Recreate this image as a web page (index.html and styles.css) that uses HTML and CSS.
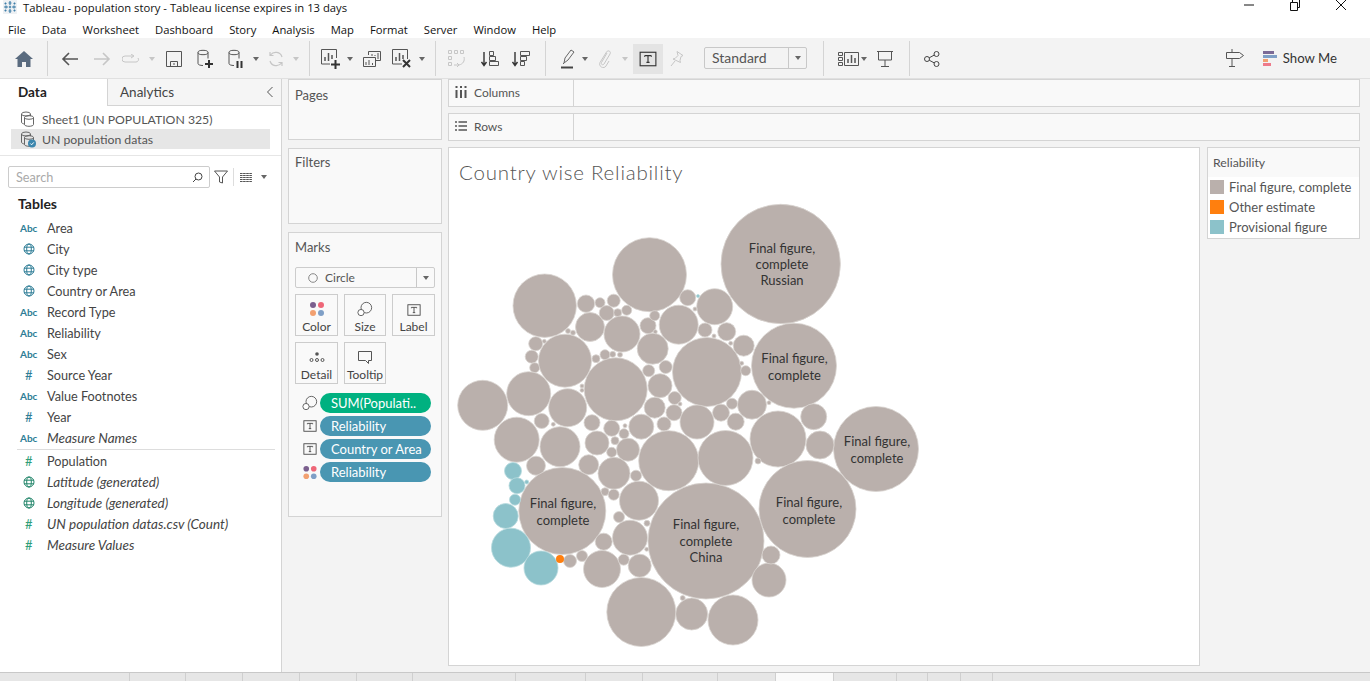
FILE: index.html
```html
<!DOCTYPE html>
<html lang="en">
<head>
    <meta charset="UTF-8">
    <title>Tableau - population story</title>
    <link rel="stylesheet" href="styles.css">
</head>
<body>
    <svg class="defs" width="0" height="0">
        <symbol id="i-text" viewBox="0 0 16 16"><rect x="1" y="2" width="14" height="12" fill="none" stroke="currentColor"/><path d="M5 5h6M8 5v6M6.6 11h2.8M5 5v1M11 5v1" fill="none" stroke="currentColor"/></symbol>
        <symbol id="i-size" viewBox="0 0 18 18"><circle cx="10.5" cy="7.5" r="6" fill="none" stroke="currentColor"/><circle cx="4.5" cy="13" r="3.5" fill="#fff" stroke="currentColor"/></symbol>
        <symbol id="i-color" viewBox="0 0 16 16"><circle cx="4" cy="4" r="3" fill="#7b5f8e"/><circle cx="12" cy="4" r="3" fill="#ee6677"/><circle cx="4" cy="12" r="3" fill="#f2a070"/><circle cx="12" cy="12" r="3" fill="#7f9fc6"/></symbol>
        <symbol id="i-globe" viewBox="0 0 12 12"><g fill="none" stroke="#2e7d96"><circle cx="6" cy="6" r="5"/><ellipse cx="6" cy="6" rx="2.3" ry="5"/><path d="M1 4.2h10M1 7.8h10"/></g></symbol>
        <symbol id="i-ds" viewBox="0 0 18 20"><g fill="none" stroke="currentColor"><ellipse cx="7" cy="3.5" rx="5" ry="2.2"/><path d="M2 3.5v11c0 1.2 2 2 5 2M12 3.5v6"/></g></symbol>
        <symbol id="i-stack" viewBox="0 0 16 16"><g fill="none" stroke="#666"><ellipse cx="6" cy="3" rx="4.500" ry="2"/><path d="M1.500 3v8c0 1.200 1.500 2 3.500 2M10.500 3v2"/><ellipse cx="9" cy="6.500" rx="4.500" ry="1.800"/><path d="M4.500 6.500v7c0 1 2 1.800 4.500 1.800s4.500-.8 4.500-1.800v-7"/></g></symbol>
    </svg>

    <div class="titlebar">
        <svg class="app-logo" width="14" height="14" viewBox="0 0 14 14"><rect width="14" height="14" fill="#eef1f4"/><g stroke="#3f7fa8" stroke-width="1.2"><path d="M7 1v4M5.5 3h3M7 9v4M5.5 11h3M1 7h4M3 5.5v3M9 7h4M11 5.5v3M2.5 2.5v2M1.5 3.5h2M11.5 2.5v2M10.5 3.5h2M2.5 9.5v2M1.5 10.5h2M11.5 9.5v2M10.5 10.5h2M5.8 7h2.4M7 5.8v2.4"/></g></svg>
        <span class="app-title">Tableau - population story - Tableau license expires in 13 days</span>
        <div class="win-btns">
            <svg width="12" height="12" viewBox="0 0 12 12"><path d="M1 6h10" stroke="#111"/></svg>
            <svg width="12" height="12" viewBox="0 0 12 12"><path d="M1.500 3.500h7v8h-7zM3.500 3.500v-3h7v8h-2" fill="none" stroke="#111"/></svg>
            <svg width="12" height="12" viewBox="0 0 12 12"><path d="M1 1l10 10M11 1L1 11" stroke="#111"/></svg>
        </div>
    </div>

    <nav class="menubar">
        <span>File</span><span>Data</span><span>Worksheet</span><span>Dashboard</span><span>Story</span><span>Analysis</span><span>Map</span><span>Format</span><span>Server</span><span>Window</span><span>Help</span>
    </nav>

    <div class="toolbar">
        <div class="tool w32"><svg width="18" height="16" viewBox="0 0 18 16"><path d="M9 0L0 8h2.500v8h4.500v-5h4v5h4.500V8H18z" fill="#5a6b7f"/></svg></div>
        <i class="sep sep-a"></i>
        <div class="tool w32"><svg width="18" height="14" viewBox="0 0 18 14"><path d="M17 7H2M8 1L2 7l6 6" fill="none" stroke="#555" stroke-width="1.600"/></svg></div>
        <div class="tool w32 off"><svg width="18" height="14" viewBox="0 0 18 14"><path d="M1 7h15M10 1l6 6-6 6" fill="none" stroke="currentColor" stroke-width="1.600"/></svg></div>
        <div class="tool w26 off"><svg width="18" height="10" viewBox="0 0 18 10"><path d="M11 2H3a2.500 2.500 0 0 0 0 6h11a2.500 2.500 0 0 0 2-4M9 0l3 2-3 2" fill="none" stroke="currentColor"/></svg></div>
        <div class="tool w16 off"><b class="caret"></b></div>
        <div class="tool w28"><svg width="16" height="16" viewBox="0 0 16 16"><path d="M.5.500h15v15H.5zM4.500 15.500v-5h7v5M7 13h2" fill="none" stroke="#555"/></svg></div>
        <div class="tool w34"><svg width="18" height="20" viewBox="0 0 18 20" color="#555"><use href="#i-ds"/><path d="M9 15h8M13 11v8" stroke="#333" stroke-width="2"/></svg></div>
        <div class="tool w28"><svg width="18" height="20" viewBox="0 0 18 20" color="#555"><use href="#i-ds"/><path d="M10.500 12v7M14.500 12v7" stroke="#333" stroke-width="2"/></svg></div>
        <div class="tool w12"><b class="caret"></b></div>
        <div class="tool w28 off"><svg width="16" height="16" viewBox="0 0 16 16"><path d="M14 6a6.500 6.500 0 0 0-11.500-2M2 10a6.500 6.500 0 0 0 11.500 2M2 1v3.500h3.500M14 15v-3.500h-3.500" fill="none" stroke="currentColor" stroke-width="1.200"/></svg></div>
        <div class="tool w12 off"><b class="caret"></b></div>
        <i class="sep sep-a"></i>
        <div class="tool w30"><svg width="20" height="20" viewBox="0 0 20 20"><path d="M9 15H.5V.5h15V9" fill="none" stroke="#555"/><path d="M4 12V8M7.500 12V4M11 10V6" stroke="#555" stroke-width="1.500"/><path d="M10 15.500h9M14.500 11v9" stroke="#333" stroke-width="2"/></svg></div>
        <div class="tool w8"><b class="caret"></b></div>
        <div class="tool w36"><svg width="18" height="16" viewBox="0 0 18 16"><path d="M5.500 4V.5h12v9H13M.5 6.500h12v9H.5z" fill="#f3f3f3" stroke="#555"/><path d="M3 14v-3M6 14v-5M9.500 14v-2M9 5V3M12 5V4M15 8V2" stroke="#555"/></svg></div>
        <div class="tool w24"><svg width="20" height="20" viewBox="0 0 20 20"><path d="M10 15H.5V.5h15V10" fill="none" stroke="#555"/><path d="M4 12V8M7.500 12V4M11 10V6" stroke="#555" stroke-width="1.500"/><path d="M11 11l7 7M18 11l-7 7" stroke="#333" stroke-width="2"/></svg></div>
        <div class="tool w16"><b class="caret"></b></div>
        <i class="sep sep-b"></i>
        <div class="tool w30 off"><svg width="18" height="18" viewBox="0 0 18 18"><path d="M.5.500h3v3h-3zM6.500.5h3v3h-3zM12.500.5h3v3h-3zM.5 6.500h3v3h-3zM.5 12.500h3v3h-3zM16 7c1 4-1 7-5 8M6 15l5 0M9 13l2 2-2 2" fill="none" stroke="currentColor"/></svg></div>
        <div class="tool w36"><svg width="18" height="16" viewBox="0 0 18 16"><path d="M3 1v13M.5 11L3 14.500 5.500 11" fill="none" stroke="#333" stroke-width="1.400"/><path d="M8.500.5h4v4h-4zM8.500 5.500h6v4h-6zM8.500 10.500h9v4h-9z" fill="none" stroke="#555"/></svg></div>
        <div class="tool w26"><svg width="18" height="16" viewBox="0 0 18 16"><path d="M3 1v13M.5 11L3 14.500 5.500 11" fill="none" stroke="#333" stroke-width="1.400"/><path d="M8.500.5h9v4h-9zM8.500 5.500h6v4h-6zM8.500 10.500h4v4h-4z" fill="none" stroke="#555"/></svg></div>
        <i class="sep sep-c"></i>
        <div class="tool w28"><svg width="14" height="20" viewBox="0 0 14 20"><path d="M3 14l1-5L10 1l3 2-6 8zM2 15l1-1" fill="none" stroke="#666"/><path d="M0 18.500h12" stroke="#444" stroke-width="2"/></svg></div>
        <div class="tool w6"><b class="caret"></b></div>
        <div class="tool w34 off"><svg width="14" height="18" viewBox="0 0 14 18"><path d="M9 3L3.500 12.500c-1 2 1.500 3 2.500 1.500L12 4c1.500-2.500-2-4.500-3.500-2L2 12.500c-2 4 4 7 6 3.500l3-5" fill="none" stroke="currentColor"/></svg></div>
        <div class="tool w6 off"><b class="caret"></b></div>
        <div class="tool w30 tool-on"><svg width="18" height="18" color="#333"><use href="#i-text"/></svg></div>
        <div class="tool w28 off"><svg width="14" height="16" viewBox="0 0 14 16"><path d="M7 .5l6 4-2 1-1 4 .5 2L3 8l2-.5 3-3zM5 10l-4 5" fill="none" stroke="currentColor"/></svg></div>
        <div class="fit-select"><span>Standard</span><b class="caret-box"><b class="caret"></b></b></div>
        <i class="sep sep-d"></i>
        <div class="tool w26"><svg width="21" height="14" viewBox="0 0 21 14"><path d="M.5.500h4v3h-4zM.5 5.500h4v3h-4zM.5 10.500h4v3h-4zM6.500.5h14v13h-14z" fill="none" stroke="#555"/><path d="M10 11V7M13.500 11V3M17 11V6" stroke="#555" stroke-width="1.500"/></svg></div>
        <div class="tool w6"><b class="caret"></b></div>
        <div class="tool w36"><svg width="16" height="16" viewBox="0 0 16 16"><path d="M0 .5h16M1.500 1v8h13V1M8 9v6M4 15.500h8" fill="none" stroke="#555"/></svg></div>
        <i class="sep sep-e"></i>
        <div class="tool w32"><svg width="16" height="16" viewBox="0 0 16 16"><g fill="none" stroke="#444"><circle cx="3" cy="8" r="2.500"/><circle cx="12.500" cy="3" r="2.500"/><circle cx="12.500" cy="13" r="2.500"/><path d="M5.200 6.800l5-2.700M5.200 9.200l5 2.700"/></g></svg></div>
        <div class="tool-right">
            <svg width="18" height="18" viewBox="0 0 18 18"><path d="M.5 3.500h13l4 3-4 3H.5zM6 0v3M6 10v7M3 17.500h6" fill="none" stroke="#555"/></svg>
            <div class="show-me">
                <svg width="14" height="15" viewBox="0 0 14 15"><rect width="11" height="3" fill="#7b6a96"/><rect y="4" width="14" height="3" fill="#7f9fc6"/><rect y="8" width="5" height="3" fill="#f2a070"/><rect y="12" width="8" height="3" fill="#ee7a8a"/></svg>
                <span>Show Me</span>
            </div>
        </div>
    </div>

    <main class="main">
        <aside class="sidebar">
            <div class="side-tabs">
                <div class="side-tab active">Data</div>
                <div class="side-tab other">Analytics<svg width="8" height="12" viewBox="0 0 8 12"><path d="M6.500 1L1.500 6l5 5" fill="none" stroke="#555"/></svg></div>
            </div>
            <div class="sources">
                <div class="source"><svg width="16" height="16"><use href="#i-stack"/></svg>Sheet1 (UN POPULATION 325)</div>
                <div class="source selected"><svg width="16" height="17" viewBox="0 0 16 17"><use href="#i-stack" width="16" height="16"/><circle cx="12" cy="12.500" r="4" fill="#3b86ad"/><path d="M10.300 12.500l1.300 1.300 2.200-2.400" fill="none" stroke="#fff"/></svg>UN population datas</div>
            </div>
            <div class="search-row">
                <div class="search"><span>Search</span><svg width="11" height="11" viewBox="0 0 11 11"><circle cx="6.500" cy="4.500" r="3.500" fill="none" stroke="#444"/><path d="M4 7L1 10" stroke="#444"/></svg></div>
                <svg class="search-filter" width="14" height="14" viewBox="0 0 14 14"><path d="M.5 1h13L8.500 7v6l-3-1V7z" fill="none" stroke="#555"/></svg>
                <i class="search-sep"></i>
                <svg class="search-list" width="12" height="9" viewBox="0 0 12 9"><path d="M0 .5h12M0 2.500h12M0 4.500h12M0 6.500h12M0 8.500h12" stroke="#555" stroke-dasharray="2.600 .5"/></svg>
                <b class="caret"></b>
            </div>
            <h2 class="tables">Tables</h2>
            <ul class="fields">
                <li><span class="abc">Abc</span>Area</li>
                <li><span class="ficon"><svg width="12" height="12"><use href="#i-globe"/></svg></span>City</li>
                <li><span class="ficon"><svg width="12" height="12"><use href="#i-globe"/></svg></span>City type</li>
                <li><span class="ficon"><svg width="12" height="12"><use href="#i-globe"/></svg></span>Country or Area</li>
                <li><span class="abc">Abc</span>Record Type</li>
                <li><span class="abc">Abc</span>Reliability</li>
                <li><span class="abc">Abc</span>Sex</li>
                <li><span class="hash">#</span>Source Year</li>
                <li><span class="abc">Abc</span>Value Footnotes</li>
                <li><span class="hash">#</span>Year</li>
                <li class="gen"><span class="abc">Abc</span>Measure Names</li>
            </ul>
            <ul class="fields measures">
                <li><span class="hash green">#</span>Population</li>
                <li class="gen"><span class="ficon"><svg width="12" height="12" class="to-green"><use href="#i-globe"/></svg></span>Latitude (generated)</li>
                <li class="gen"><span class="ficon"><svg width="12" height="12" class="to-green"><use href="#i-globe"/></svg></span>Longitude (generated)</li>
                <li class="gen"><span class="hash green">#</span>UN population datas.csv (Count)</li>
                <li class="gen"><span class="hash green">#</span>Measure Values</li>
            </ul>
        </aside>

        <div class="cards">
            <section class="card pages"><h3>Pages</h3></section>
            <section class="card filters"><h3>Filters</h3></section>
            <section class="card marks">
                <h3>Marks</h3>
                <div class="mark-type"><svg width="10" height="10" viewBox="0 0 10 10"><circle cx="5" cy="5" r="4.300" fill="none" stroke="#888"/></svg><span>Circle</span><b class="caret-box"><b class="caret"></b></b></div>
                <div class="mark-grid">
                    <div class="mark-btn"><svg width="16" height="16"><use href="#i-color"/></svg>Color</div>
                    <div class="mark-btn"><svg width="16" height="16" color="#555"><use href="#i-size"/></svg>Size</div>
                    <div class="mark-btn"><svg width="14" height="14" color="#444"><use href="#i-text"/></svg>Label</div>
                    <div class="mark-btn"><svg width="16" height="16" viewBox="0 0 16 16"><circle cx="8" cy="5" r="1.800" fill="#555"/><g fill="none" stroke="#555"><circle cx="2.500" cy="11" r="1.500"/><circle cx="8" cy="11" r="1.500"/><circle cx="13.500" cy="11" r="1.500"/></g></svg>Detail</div>
                    <div class="mark-btn"><svg width="16" height="16" viewBox="0 0 16 16"><path d="M1.500 2.500h13v9h-3v3l-3-3h-7z" fill="none" stroke="#555"/></svg>Tooltip</div>
                </div>
                <div class="pill-row"><svg width="16" height="16" color="#555"><use href="#i-size"/></svg><span class="pill measure">SUM(Populati..</span></div>
                <div class="pill-row"><svg width="14" height="14" color="#444"><use href="#i-text"/></svg><span class="pill">Reliability</span></div>
                <div class="pill-row"><svg width="14" height="14" color="#444"><use href="#i-text"/></svg><span class="pill">Country or Area</span></div>
                <div class="pill-row"><svg width="15" height="15"><use href="#i-color"/></svg><span class="pill">Reliability</span></div>
            </section>
        </div>

        <div class="work">
            <div class="shelf">
                <div class="shelf-label"><svg width="12" height="12" viewBox="0 0 12 12"><path d="M1.500 0v2M6 0v2M10.500 0v2M1.500 4v8M6 4v8M10.500 4v8" stroke="#555" stroke-width="2"/></svg>Columns</div>
            </div>
            <div class="shelf">
                <div class="shelf-label"><svg width="12" height="12" viewBox="0 0 12 12"><path d="M0 2h2M3.500 2H12M0 6h2M3.500 6H12M0 10h2M3.500 10H12" stroke="#555" stroke-width="1.500"/></svg>Rows</div>
            </div>
            <div class="view-row">
                <div class="canvas">
                    <div class="viz-title">Country wise Reliability</div>
                    <svg class="viz" width="750" height="477" viewBox="449 188 750 477">
                        <g class="final">
                            <circle cx="649.500" cy="274.700" r="37"/><circle cx="544.700" cy="305.700" r="31.700"/><circle cx="586" cy="303.700" r="8.700"/><circle cx="600" cy="302.700" r="5"/>
                            <circle cx="613.700" cy="300.700" r="6.500"/><circle cx="606.700" cy="313" r="7.500"/><circle cx="617.700" cy="312.700" r="4"/><circle cx="626.700" cy="310.300" r="5"/>
                            <circle cx="590" cy="327" r="14.500"/><circle cx="622" cy="334" r="18"/><circle cx="648" cy="325.700" r="8"/><circle cx="654.700" cy="315.700" r="5"/>
                            <circle cx="652.700" cy="348.700" r="15.500"/><circle cx="678.700" cy="324.700" r="19.500"/><circle cx="687.700" cy="297.700" r="8"/><circle cx="535.700" cy="343.700" r="7"/>
                            <circle cx="531.700" cy="356.700" r="6.500"/><circle cx="534.700" cy="367.700" r="5"/><circle cx="565" cy="360.700" r="26.500"/><circle cx="596" cy="358.700" r="4"/>
                            <circle cx="605" cy="354.700" r="5"/><circle cx="612.700" cy="354.300" r="3"/><circle cx="620" cy="354.700" r="2.500"/><circle cx="615.700" cy="389.300" r="31.500"/>
                            <circle cx="648.700" cy="370.700" r="6"/><circle cx="665.700" cy="367" r="6.500"/><circle cx="660" cy="385.700" r="12"/><circle cx="674.700" cy="398" r="6.500"/>
                            <circle cx="654.700" cy="407.700" r="10.500"/><circle cx="674" cy="412.700" r="8"/><circle cx="707" cy="372" r="34.500"/><circle cx="528.700" cy="393.700" r="22"/>
                            <circle cx="482.700" cy="405.300" r="25"/><circle cx="567.700" cy="407.700" r="19"/><circle cx="541.700" cy="421" r="7.500"/><circle cx="592" cy="422.700" r="8"/>
                            <circle cx="611.700" cy="428.300" r="8"/><circle cx="641.300" cy="426.700" r="12.500"/><circle cx="664" cy="424" r="7"/><circle cx="516.700" cy="439.700" r="22.500"/>
                            <circle cx="582" cy="386" r="2"/><circle cx="582" cy="390.300" r="2"/><circle cx="568" cy="331" r="2.500"/><circle cx="573" cy="332.700" r="2.500"/>
                            <circle cx="544.300" cy="341.300" r="2"/><circle cx="680" cy="404" r="2"/><circle cx="655.300" cy="331.700" r="2"/><circle cx="625" cy="425.700" r="2"/>
                            <circle cx="553.300" cy="424.300" r="2"/><circle cx="560" cy="446.700" r="20"/><circle cx="536" cy="465.700" r="9.500"/><circle cx="597" cy="443" r="12"/>
                            <circle cx="624" cy="433.700" r="5"/><circle cx="615" cy="440.700" r="4"/><circle cx="611.700" cy="452.300" r="5"/><circle cx="628" cy="449.700" r="11.500"/>
                            <circle cx="588.700" cy="464.700" r="10"/><circle cx="614" cy="473.300" r="16"/><circle cx="636" cy="475.700" r="5.500"/><circle cx="668.700" cy="460.700" r="30"/>
                            <circle cx="562.300" cy="511" r="43.500"/><circle cx="570" cy="561" r="6.500"/><circle cx="582" cy="556" r="5.500"/><circle cx="603.700" cy="541.700" r="8.500"/>
                            <circle cx="602" cy="569" r="18.500"/><circle cx="630" cy="537.700" r="17.500"/><circle cx="639" cy="500.700" r="19.500"/><circle cx="605" cy="491.700" r="4"/>
                            <circle cx="613.700" cy="494.700" r="5.500"/><circle cx="619" cy="517" r="5.500"/><circle cx="647" cy="523.300" r="3"/><circle cx="623.700" cy="559.700" r="5.500"/>
                            <circle cx="639.700" cy="565.700" r="11.500"/><circle cx="646.700" cy="549.300" r="2"/><circle cx="641.300" cy="612" r="34.500"/><circle cx="691.700" cy="614" r="16"/>
                            <circle cx="682.700" cy="598" r="2.500"/><circle cx="706" cy="541" r="58"/><circle cx="733" cy="620" r="25"/><circle cx="769" cy="580" r="17"/>
                            <circle cx="771" cy="555" r="9"/><circle cx="780.700" cy="264" r="59.700"/><circle cx="794" cy="365.700" r="42.500"/><circle cx="714.700" cy="306.700" r="18"/>
                            <circle cx="705" cy="330" r="7"/><circle cx="726.700" cy="331.700" r="9"/><circle cx="743.700" cy="345.700" r="10.500"/><circle cx="745.700" cy="370.700" r="5"/>
                            <circle cx="752" cy="404.700" r="14.500"/><circle cx="721" cy="412.700" r="8.500"/><circle cx="732" cy="403.700" r="5.500"/><circle cx="735.700" cy="421.700" r="8.500"/>
                            <circle cx="778" cy="439" r="28"/><circle cx="813.700" cy="416.700" r="13"/><circle cx="697" cy="422" r="17"/><circle cx="769" cy="402.700" r="2"/>
                            <circle cx="741.700" cy="363.300" r="2"/><circle cx="730.700" cy="343.300" r="2"/><circle cx="714" cy="336" r="2"/><circle cx="695" cy="309" r="2"/>
                            <circle cx="876" cy="449" r="42.500"/><circle cx="820" cy="445" r="14"/><circle cx="807.500" cy="509" r="48.500"/><circle cx="725.500" cy="458" r="27.500"/>
                            <circle cx="758" cy="461" r="3"/>
                        </g>
                        <g class="prov">
                            <circle cx="513" cy="471" r="8.500"/><circle cx="517" cy="485.700" r="8"/><circle cx="526.700" cy="482" r="2"/><circle cx="515" cy="499.700" r="5.500"/>
                            <circle cx="505.700" cy="516" r="12.500"/><circle cx="511" cy="547.700" r="19.500"/><circle cx="541" cy="568" r="17"/><circle cx="698" cy="296" r="1.500"/>
                        </g>
                        <circle class="other" cx="560" cy="559" r="4"/>
                        <g class="labels">
                            <text x="782" y="253">Final figure,</text><text x="782" y="269">complete</text><text x="782" y="285">Russian</text>
                            <text x="794.500" y="363">Final figure,</text><text x="794.500" y="380">complete</text>
                            <text x="877" y="446">Final figure,</text><text x="877" y="463">complete</text>
                            <text x="809" y="507">Final figure,</text><text x="809" y="524">complete</text>
                            <text x="563" y="508">Final figure,</text><text x="563" y="525">complete</text>
                            <text x="706" y="529">Final figure,</text><text x="706" y="546">complete</text><text x="706" y="562">China</text>
                        </g>
                    </svg>
                </div>
                <div class="legend">
                    <div class="legend-title">Reliability</div>
                    <div class="legend-item"><i class="swatch sw-final"></i>Final figure, complete</div>
                    <div class="legend-item"><i class="swatch sw-other"></i>Other estimate</div>
                    <div class="legend-item"><i class="swatch sw-prov"></i>Provisional figure</div>
                </div>
            </div>
        </div>
    </main>

    <div class="tabstrip">
        <i></i><i></i><i></i><i></i><i></i><i></i><i></i><i></i><i></i><i></i><i></i><i class="current"></i><i></i><i></i><i></i><i></i>
    </div>
</body>
</html>
```

FILE: styles.css
```css
* {
    box-sizing: border-box;
}

html, body {
    margin: 0;
    padding: 0;
}

body {
    width: 1370px;
    height: 681px;
    overflow: hidden;
    background-color: #fff;
    color: #333;
    font-family: 'Lato', 'Open Sans', sans-serif;
    font-size: 12.700px;
}

.defs {
    display: block;
    height: 0;
}

/* title and menu */
.titlebar {
    height: 15px;
    display: flex;
    align-items: center;
    padding-left: 3px;
    font-family: 'Open Sans', sans-serif;
    font-size: 11.250px;
    color: #111;
}

.app-logo {
    align-self: flex-start;
    margin-right: 6px;
}

.win-btns {
    align-self: flex-start;
    margin-left: auto;
    margin-top: -1px;
    padding-right: 23px;
    display: flex;
    gap: 34px;
}

.menubar {
    height: 23px;
    display: flex;
    align-items: center;
    gap: 16px;
    padding: 5px 0 0 8px;
    font-family: 'Open Sans', sans-serif;
    font-size: 11.250px;
    color: #111;
}

/* toolbar */
.toolbar {
    height: 41px;
    display: flex;
    align-items: center;
    padding-left: 8px;
    padding-right: 33px;
    background-color: #f3f3f3;
    border-bottom: 1px solid #e0e0e0;
}

.tool {
    height: 30px;
    flex: none;
    margin-top: 1px;
    display: flex;
    align-items: center;
    justify-content: center;
    color: #555;
}

.tool.off {
    color: #c6c6c6;
}

.tool-on {
    margin-left: 5px;
    background-color: #e4e4e4;
}

.w6 { width: 6px; }
.w8 { width: 8px; }
.w12 { width: 12px; }
.w16 { width: 16px; }
.w24 { width: 24px; }
.w26 { width: 26px; }
.w28 { width: 28px; }
.w30 { width: 30px; }
.w32 { width: 32px; }
.w34 { width: 34px; }
.w36 { width: 36px; }

.caret {
    display: block;
    width: 0;
    height: 0;
    border-left: 3.500px solid transparent;
    border-right: 3.500px solid transparent;
    border-top: 4px solid #666;
}

.off .caret {
    border-top-color: #c6c6c6;
}

.sep {
    flex: none;
    width: 1px;
    height: 35px;
    background-color: #d4d4d4;
}

.sep-a { margin: 1px 6px 0 7px; }
.sep-b { margin: 1px 6px 0 5px; }
.sep-c { margin: 1px 8px 0 11px; }
.sep-d { margin: 1px 11px 0 16px; }
.sep-e { margin: 1px 6px 0; }

.fit-select {
    width: 103px;
    height: 22px;
    margin-left: 13px;
    display: flex;
    align-items: center;
    justify-content: space-between;
    padding-left: 7px;
    border: 1px solid #c8c8c8;
    border-radius: 2px;
    font-size: 14px;
    color: #555;
}

.fit-select span {
    margin-top: -2px;
}

.caret-box {
    width: 18px;
    height: 100%;
    display: flex;
    align-items: center;
    justify-content: center;
    border-left: 1px solid #c8c8c8;
}

.tool-right {
    margin-left: auto;
    display: flex;
    align-items: center;
    gap: 19px;
}

.show-me {
    display: flex;
    align-items: center;
    gap: 6px;
    font-size: 13.200px;
}

/* main area */
.main {
    height: 593px;
    display: flex;
    background-color: #f3f3f3;
}

.sidebar {
    width: 282px;
    flex: none;
    background-color: #fff;
    border-right: 1px solid #d4d4d4;
}

.side-tabs {
    height: 27px;
    display: flex;
}

.side-tab {
    display: flex;
    align-items: center;
    padding-bottom: 1px;
    font-size: 13.500px;
}

.side-tab.active {
    width: 107px;
    padding-left: 18px;
    font-weight: 700;
    color: #222;
}

.side-tab.other {
    flex: 1;
    justify-content: space-between;
    padding-left: 12px;
    padding-right: 7px;
    background-color: #f5f5f5;
    border-left: 1px solid #d4d4d4;
    border-bottom: 1px solid #d4d4d4;
    color: #444;
}

.sources {
    padding: 3px 11px 6px;
    border-bottom: 1px solid #e6e6e6;
    font-size: 12.250px;
}

.source {
    height: 20px;
    display: flex;
    align-items: center;
    gap: 6px;
    padding-left: 9px;
    color: #555;
}

.source.selected {
    background-color: #e6e6e6;
}

.search-row {
    display: flex;
    align-items: center;
    padding: 10px 0 0 8px;
}

.search {
    width: 202px;
    height: 22px;
    display: flex;
    align-items: center;
    justify-content: space-between;
    padding: 0 6px 0 7px;
    background-color: #fff;
    border: 1px solid #ccc;
    border-radius: 2px;
    color: #aaa;
}

.search-filter {
    margin-left: 4px;
}

.search-sep {
    width: 1px;
    height: 18px;
    margin: 0 6px 0 5px;
    background-color: #ddd;
}

.search-list {
    margin-right: 9px;
}

.tables {
    margin: 7px 0 4px 18px;
    font-size: 14px;
    line-height: 18px;
    font-weight: 700;
    color: #222;
}

.fields {
    margin: 0;
    padding: 0;
    list-style: none;
}

.fields li {
    height: 21px;
    display: flex;
    align-items: center;
    color: #444;
}

.fields li.gen {
    font-size: 13.500px;
    font-style: italic;
}

.measures {
    margin: 1px 6px 0 17px;
    border-top: 1px solid #ddd;
}

.measures li {
    margin-left: -17px;
}

.abc, .ficon, .hash {
    width: 47px;
    flex: none;
    padding-left: 21px;
    display: flex;
    align-items: center;
    font-style: normal;
    color: #2e7d96;
}

.abc {
    font-size: 10px;
    padding-left: 20px;
    font-weight: 700;
}

.ficon {
    padding-left: 23px;
}

.hash {
    padding-left: 25px;
    font-size: 13px;
}

.hash.green {
    color: #2e9e78;
}

.to-green {
    filter: hue-rotate(-35deg);
}

/* pages, filters, marks */
.cards {
    width: 154px;
    flex: none;
    margin-left: 6px;
    display: flex;
    flex-direction: column;
    gap: 8px;
}

.card {
    background-color: #f9f9f9;
    border: 1px solid #d4d4d4;
    padding: 6px 6px 0;
}

.card h3 {
    margin: 0;
    font-size: 13px;
    line-height: 16px;
    font-weight: 400;
    color: #555;
}

.pages { height: 61px; padding-top: 7px; }
.filters { height: 76px; padding-top: 5px; }
.marks { height: 285px; }

.mark-type {
    height: 21px;
    margin-top: 12px;
    display: flex;
    align-items: center;
    padding-left: 12px;
    background-color: #f9f9f9;
    border: 1px solid #ccc;
    border-radius: 2px;
    font-size: 12px;
    color: #555;
}

.mark-type span {
    margin-left: 7px;
    flex: 1;
}

.mark-grid {
    margin-top: 6px;
    display: grid;
    grid-template-columns: 43px 42px 43px;
    grid-auto-rows: 42px;
    gap: 6px;
}

.mark-btn {
    display: flex;
    flex-direction: column;
    align-items: center;
    justify-content: flex-end;
    gap: 2px;
    padding-bottom: 1px;
    border: 1px solid #ccc;
    font-size: 12px;
    color: #444;
}

.pill-row {
    height: 20px;
    margin-top: 3px;
    display: flex;
    align-items: center;
}

.mark-grid + .pill-row {
    margin-top: 9px;
}

.pill-row svg {
    width: 16px;
    margin-left: 7px;
}

.pill {
    width: 111px;
    height: 20px;
    margin-left: 2px;
    padding-left: 11px;
    display: flex;
    align-items: center;
    border-radius: 10px;
    background-color: #4996b2;
    color: #fff;
    font-size: 13px;
    white-space: nowrap;
}

.pill.measure {
    background-color: #00b180;
}

/* shelves and view */
.work {
    width: 912px;
    flex: none;
    margin-left: 6px;
    display: flex;
    flex-direction: column;
    gap: 6px;
}

.shelf {
    height: 28px;
    flex: none;
    background-color: #f9f9f9;
    border: 1px solid #d4d4d4;
}

.shelf-label {
    width: 125px;
    height: 100%;
    display: flex;
    align-items: center;
    gap: 7px;
    padding: 0 0 2px 6px;
    border-right: 1px solid #d4d4d4;
    font-size: 12px;
    color: #555;
}

.view-row {
    display: flex;
    align-items: flex-start;
    gap: 7px;
}

.canvas {
    width: 752px;
    height: 519px;
    background-color: #fff;
    border: 1px solid #d4d4d4;
}

.viz-title {
    height: 40px;
    padding: 12px 0 0 10px;
    font-size: 20.500px;
    font-weight: 300;
    line-height: 24px;
    letter-spacing: .78px;
    color: #555;
}

.viz {
    display: block;
}

.final circle {
    fill: #bab0ac;
    stroke: #d9d4d1;
    stroke-width: .8;
}

.prov circle {
    fill: #8cc2ca;
    stroke: #b8dade;
    stroke-width: .8;
}

.other {
    fill: #ff7f0e;
}

.labels text {
    text-anchor: middle;
    font-family: 'Lato', sans-serif;
    font-size: 13px;
    fill: #333;
}

.legend {
    width: 153px;
    height: 92px;
    flex: none;
    background-color: #fff;
    border: 1px solid #d4d4d4;
}

.legend-title {
    height: 29px;
    padding-left: 5px;
    display: flex;
    align-items: center;
    background-color: #f9f9f9;
    font-size: 12.300px;
    color: #555;
}

.legend-item {
    height: 20px;
    display: flex;
    align-items: center;
    gap: 5px;
    padding-left: 2px;
    font-size: 13px;
    color: #555;
    white-space: nowrap;
}

.swatch {
    width: 14px;
    height: 14px;
    flex: none;
}

.sw-final { background-color: #bab0ac; }
.sw-other { background-color: #ff7f0e; }
.sw-prov { background-color: #8cc2ca; }

/* sheet tabs at the bottom */
.tabstrip {
    height: 9px;
    display: grid;
    grid-template-columns: 130px 56px 57px 57px 57px 56px 103px 70px 57px 75px 58px 58px 63px 31px 33px 32px 1fr;
    background-color: #e6e6e6;
    border-top: 1px solid #c8c8c8;
}

.tabstrip i {
    border-right: 1px solid #cfcfcf;
}

.tabstrip i.current {
    background-color: #fafafa;
}
```
